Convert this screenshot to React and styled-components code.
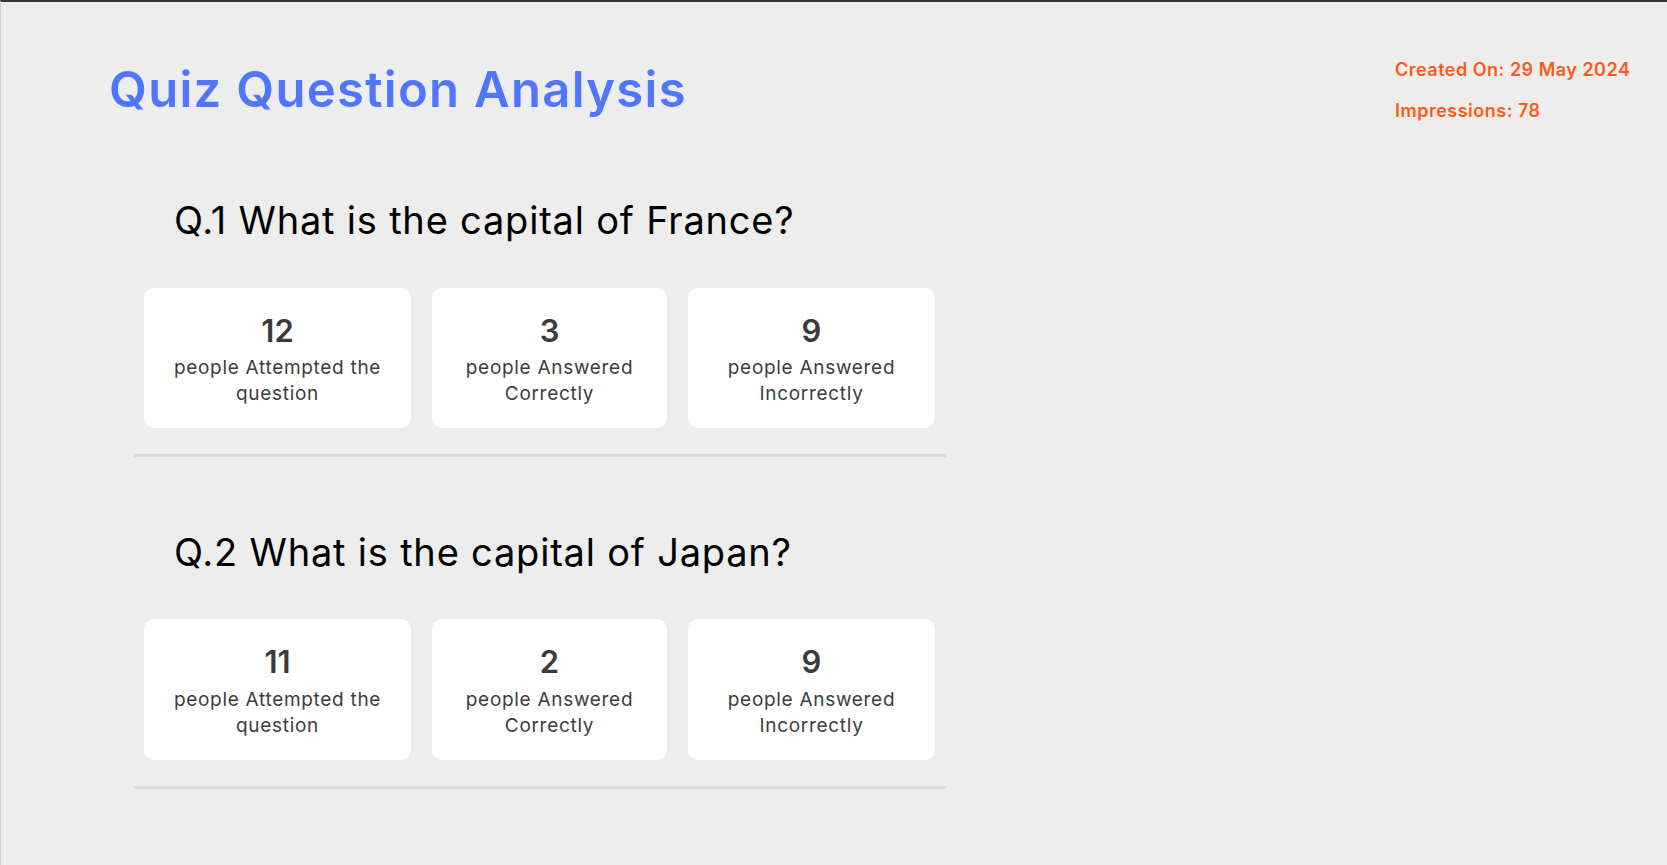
import React from 'react';
import styled, { createGlobalStyle } from 'styled-components';

const GlobalStyle = createGlobalStyle`
  html, body {
    margin: 0;
    padding: 0;
    background: #ededed;
  }

  body {
    font-family: Inter, "Noto Sans", "Liberation Sans", sans-serif;
  }
`;

const questions = [
  { id: 1, text: 'What is the capital of France?', attempted: 12, correct: 3, incorrect: 9 },
  { id: 2, text: 'What is the capital of Japan?', attempted: 11, correct: 2, incorrect: 9 },
];

const StatCard = ({ value, label, width }) => (
  <Card $width={width}>
    <Count>{value}</Count>
    <Label>{label}</Label>
  </Card>
);

const QuestionBlock = ({ question }) => (
  <Section>
    <QuestionTitle>
      Q.{question.id} {question.text}
    </QuestionTitle>
    <CardRow>
      <StatCard value={question.attempted} label="people Attempted the question" width={267} />
      <StatCard value={question.correct} label="people Answered Correctly" width={235} />
      <StatCard value={question.incorrect} label="people Answered Incorrectly" width={247} />
    </CardRow>
    <Divider />
  </Section>
);

const App = () => (
  <Page>
    <GlobalStyle />
    <Header>
      <Title>Quiz Question Analysis</Title>
      <Meta>
        <MetaLine>Created On: 29 May 2024</MetaLine>
        <MetaLine>Impressions: 78</MetaLine>
      </Meta>
    </Header>

    <Questions>
      {questions.map((q) => (
        <QuestionBlock key={q.id} question={q} />
      ))}
    </Questions>
  </Page>
);

const Page = styled.div`
  min-height: 100vh;
  border-top: 2px solid #363636;
  border-left: 1px solid #d2d2d2;
  box-sizing: border-box;
`;

const Header = styled.header`
  display: flex;
  justify-content: space-between;
  align-items: flex-start;
  padding: 54px 32px 0 108px;
`;

const Title = styled.h1`
  margin: 9px 0 0;
  font-size: 49px;
  line-height: 1;
  font-weight: 600;
  letter-spacing: 1.3px;
  color: #5076ff;
`;

const Meta = styled.div`
  display: flex;
  flex-direction: column;
  gap: 14px;
  width: 240px;
`;

const MetaLine = styled.p`
  margin: 0;
  font-size: 18px;
  line-height: 27px;
  font-weight: 600;
  letter-spacing: 0.5px;
  color: #ff5a17;
`;

const Questions = styled.main`
  margin-left: 133px;
  width: 812px;
`;

const Section = styled.section`
  padding-top: 73px;

  &:first-child {
    padding-top: 74px;
  }
`;

const QuestionTitle = styled.h2`
  margin: 0 0 44px;
  padding-left: 40px;
  font-size: 38px;
  line-height: 1.2;
  font-weight: 400;
  letter-spacing: 0.8px;
  color: #000;
`;

const CardRow = styled.div`
  display: flex;
  gap: 21px;
  padding: 0 10px;
`;

const Card = styled.div`
  width: ${({ $width }) => $width}px;
  box-sizing: border-box;
  padding: 24px 20px 21px;
  background: #fff;
  border-radius: 10px;
  text-align: center;
`;

const Count = styled.div`
  margin-bottom: 6px;
  font-size: 31px;
  line-height: 1.2;
  font-weight: 600;
  color: #3b3b3b;
`;

const Label = styled.p`
  margin: 0;
  font-size: 19px;
  line-height: 26px;
  letter-spacing: 0.7px;
  color: #3d3d3d;
`;

const Divider = styled.hr`
  margin: 26px 0 0;
  border: none;
  height: 3px;
  background: #d9d9d9;
`;

export default App;
